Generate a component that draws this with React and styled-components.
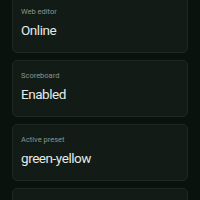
import styled, { createGlobalStyle } from 'styled-components';

const GlobalStyle = createGlobalStyle`
  html, body {
    margin: 0;
    padding: 0;
    background: #0a120d;
    font-family: Roboto, "Noto Sans", sans-serif;
  }
`;

const Page = styled.div`
  width: 200px;
  height: 200px;
  overflow: hidden;
  background: #0a120d;
`;

const List = styled.div`
  display: flex;
  flex-direction: column;
  gap: 7px;
  padding: 0 12px;
  margin-top: -4px;
`;

const Card = styled.div`
  height: 57px;
  box-sizing: border-box;
  border: 1px solid #1e2822;
  border-radius: 5px;
  background: #131b16;
  padding: 10px 8px 0;
`;

const Label = styled.div`
  font-size: 7.5px;
  line-height: 10px;
  color: #8b958f;
`;

const Value = styled.div`
  margin-top: 5px;
  font-size: 13.5px;
  line-height: 16px;
  font-weight: 400;
  letter-spacing: -0.45px;
  color: #e6ebe7;
`;

const items = [
  { label: 'Web editor', value: 'Online' },
  { label: 'Scoreboard', value: 'Enabled' },
  { label: 'Active preset', value: 'green-yellow' },
  { label: '', value: '' },
];

const App = () => (
  <Page>
    <GlobalStyle />
    <List>
      {items.map((it, i) => (
        <Card key={i}>
          <Label>{it.label}</Label>
          <Value>{it.value}</Value>
        </Card>
      ))}
    </List>
  </Page>
);

export default App;
